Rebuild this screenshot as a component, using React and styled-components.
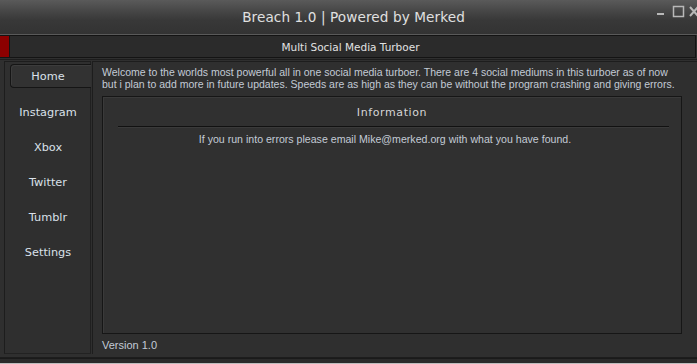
import styled, { createGlobalStyle } from 'styled-components';

const GlobalStyle = createGlobalStyle`
    html, body {
        margin: 0;
        padding: 0;
        background: #d4d4d4;
    }
`;

const navItems = ['Home', 'Instagram', 'Xbox', 'Twitter', 'Tumblr', 'Settings'];

const App = () => {
    return (
        <Window>
            <GlobalStyle />
            <TitleBar>
                <Title>Breach 1.0 | Powered by Merked</Title>
                <Controls>
                    <svg width="40" height="20" viewBox="0 0 40 20">
                        <rect x="0" y="13" width="7" height="2" fill="#b8b8b8" />
                        <rect x="16.5" y="6.5" width="10" height="10" fill="none" stroke="#b8b8b8" strokeWidth="1.5" />
                        <path d="M33 7 L41 16 M41 7 L33 16" stroke="#b8b8b8" strokeWidth="2" />
                    </svg>
                </Controls>
            </TitleBar>
            <SubBar>
                <Accent />
                <SubTitle>Multi Social Media Turboer</SubTitle>
            </SubBar>
            <Body>
                <Sidebar>
                    {navItems.map((item, i) => (
                        <NavItem key={item} $active={i === 0}>
                            {item}
                        </NavItem>
                    ))}
                </Sidebar>
                <Content>
                    <Intro>
                        Welcome to the worlds most powerful all in one social media turboer. There are 4 social mediums in this turboer as of now
                        <br />
                        but i plan to add more in future updates. Speeds are as high as they can be without the program crashing and giving errors.
                    </Intro>
                    <InfoPanel>
                        <InfoHeader>Information</InfoHeader>
                        <Rule />
                        <InfoText>If you run into errors please email Mike@merked.org with what you have found.</InfoText>
                    </InfoPanel>
                    <Version>Version 1.0</Version>
                </Content>
            </Body>
            <BottomEdge />
        </Window>
    );
};

export default App;

const Window = styled.div`
    width: 697px;
    height: 364px;
    overflow: hidden;
    display: flex;
    flex-direction: column;
    background: #2f2f2f;
    font-family: 'Liberation Sans', Arial, sans-serif;
`;

const TitleBar = styled.header`
    position: relative;
    height: 34px;
    flex-shrink: 0;
    display: flex;
    align-items: center;
    justify-content: center;
    background: linear-gradient(#5a5a5a 0%, #454545 35%, #383838 60%, #333333 100%);
    border-bottom: 1px solid #5a5a5a;
`;

const Title = styled.h1`
    margin: 0 0 0 10px;
    font-family: 'DejaVu Sans', Verdana, sans-serif;
    font-size: 13.6px;
    font-weight: normal;
    color: #e0e0e0;
    letter-spacing: 0.1px;
`;

const Controls = styled.div`
    position: absolute;
    top: 0;
    left: 657px;
    display: flex;
`;

const SubBar = styled.div`
    height: 23px;
    flex-shrink: 0;
    box-sizing: border-box;
    display: flex;
    align-items: stretch;
    background: #2b2b2b;
    border: 1px solid #141414;
    border-left: none;
    margin-right: 1px;
`;

const Accent = styled.div`
    width: 9px;
    background: #8c0000;
    border-right: 1px solid #141414;
`;

const SubTitle = styled.div`
    flex: 1;
    display: flex;
    align-items: center;
    justify-content: center;
    padding-right: 4px;
    font-family: 'DejaVu Sans', Verdana, sans-serif;
    font-size: 10.5px;
    color: #e2e2e2;
`;

const Body = styled.main`
    flex: 1;
    display: flex;
    margin-top: 1px;
    padding: 1px 0 3px 4px;
    border-top: 1px solid #1d1d1d;
    border-bottom: 1px solid #1d1d1d;
    min-height: 0;
`;

const Sidebar = styled.nav`
    width: 87px;
    box-sizing: border-box;
    display: flex;
    flex-direction: column;
    padding: 2px 0 0 5px;
    border: 1px solid #1d1d1d;
    border-right: 1px solid #202020;
    border-bottom: 1px solid #222;
`;

const NavItem = styled.div`
    height: 24px;
    box-sizing: border-box;
    margin-bottom: ${(props) => (props.$active ? '12px' : '11px')};
    margin-right: -1px;
    padding-right: 6px;
    display: flex;
    align-items: center;
    justify-content: center;
    font-family: 'DejaVu Sans', Verdana, sans-serif;
    font-size: 11.3px;
    color: #dae1ea;
    border: 1px solid ${(props) => (props.$active ? '#151515' : 'transparent')};
    border-right: none;
    border-radius: 4px 0 0 4px;
    background: ${(props) => (props.$active ? '#323232' : 'transparent')};
    box-shadow: ${(props) => (props.$active ? 'inset 1px 1px 0 #3c3c3c' : 'none')};
`;

const Content = styled.section`
    flex: 1;
    display: flex;
    flex-direction: column;
    margin-left: 1px;
    padding: 4px 0 0 9px;
    border-left: 1px solid #1d1d1d;
    border-top: 1px solid #1d1d1d;
    min-width: 0;
`;

const Intro = styled.p`
    margin: 0;
    font-size: 10.5px;
    line-height: 12px;
    color: #c3cbd6;
    white-space: nowrap;
`;

const InfoPanel = styled.div`
    width: 580px;
    height: 238px;
    box-sizing: border-box;
    margin-top: 6px;
    display: flex;
    flex-direction: column;
    align-items: center;
    background: #303030;
    border: 1px solid #161616;
    box-shadow: inset 1px 1px 0 #3a3a3a;
`;

const InfoHeader = styled.div`
    margin-top: 9px;
    height: 14px;
    font-family: 'DejaVu Sans', Verdana, sans-serif;
    font-size: 11px;
    letter-spacing: 0.6px;
    color: #d6d6d6;
`;

const Rule = styled.div`
    width: 551px;
    height: 1px;
    margin-top: 6px;
    margin-left: 3px;
    background: #111;
    box-shadow: 0 1px 0 #3a3a3a;
`;

const InfoText = styled.div`
    margin-top: 6px;
    margin-right: 14px;
    font-size: 10.6px;
    color: #c3cbd6;
`;

const Version = styled.div`
    margin-top: 5px;
    font-size: 11px;
    color: #c3cbd6;
`;

const BottomEdge = styled.div`
    height: 4px;
    flex-shrink: 0;
    background: #2a2a2a;
    border-top: 1px solid #1a1a1a;
    border-bottom: 1px solid #bdbdbd;
`;
